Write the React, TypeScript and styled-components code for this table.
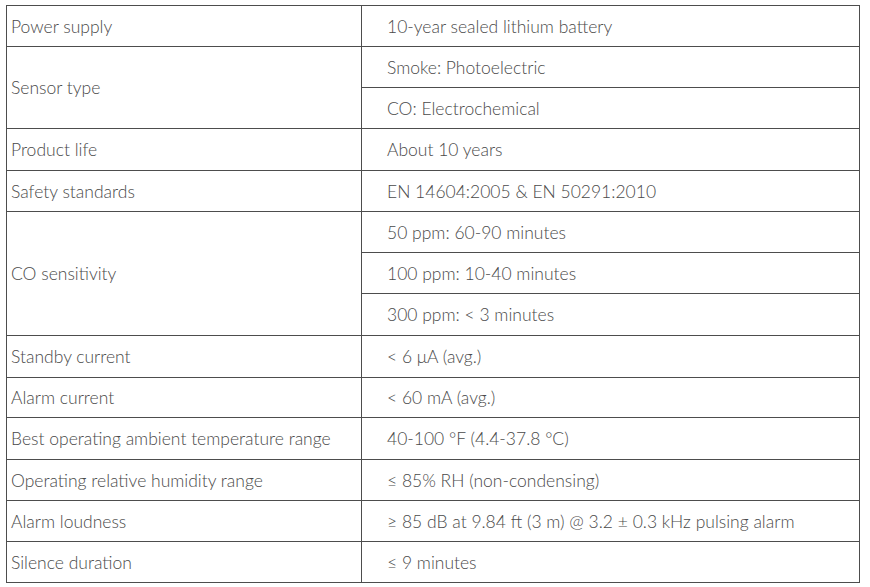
import React from "react";
import styled, { createGlobalStyle } from "styled-components";

type Spec = { label: string; values: string[]; heights: number[] };

const specs: Spec[] = [
	{ label: "Power supply", values: ["10-year sealed lithium battery"], heights: [40] },
	{ label: "Sensor type", values: ["Smoke: Photoelectric", "CO: Electrochemical"], heights: [40, 40] },
	{ label: "Product life", values: ["About 10 years"], heights: [41] },
	{ label: "Safety standards", values: ["EN 14604:2005 & EN 50291:2010"], heights: [40] },
	{
		label: "CO sensitivity",
		values: ["50 ppm: 60-90 minutes", "100 ppm: 10-40 minutes", "300 ppm: < 3 minutes"],
		heights: [40, 40, 41],
	},
	{ label: "Standby current", values: ["< 6 μA (avg.)"], heights: [41] },
	{ label: "Alarm current", values: ["< 60 mA (avg.)"], heights: [39] },
	{ label: "Best operating ambient temperature range", values: ["40-100 °F (4.4-37.8 °C)"], heights: [41] },
	{ label: "Operating relative humidity range", values: ["≤ 85% RH (non-condensing)"], heights: [40] },
	{ label: "Alarm loudness", values: ["≥ 85 dB at 9.84 ft (3 m) @ 3.2 ± 0.3 kHz pulsing alarm"], heights: [40] },
	{ label: "Silence duration", values: ["≤ 9 minutes"], heights: [40] },
];

const App = () => {
	const rows = specs.flatMap((s) => s.heights.map((h) => `${h}px`)).join(" ");
	let line = 1;
	return (
		<>
			<GlobalStyle />
			<Page>
				<SpecGrid style={{ gridTemplateRows: rows }}>
					{specs.map((s) => {
						const start = line;
						line += s.values.length;
						return (
							<React.Fragment key={s.label}>
								<Label style={{ gridRow: `${start} / span ${s.values.length}` }}>{s.label}</Label>
								{s.values.map((v) => (
									<Value key={v}>{v}</Value>
								))}
							</React.Fragment>
						);
					})}
				</SpecGrid>
			</Page>
		</>
	);
};

export default App;

const GlobalStyle = createGlobalStyle`
	body {
		margin: 0;
		background: #ffffff;
	}
`;

const Page = styled.div`
	width: 870px;
	height: 587px;
	padding: 5px 0 0 6px;
	box-sizing: border-box;
	background: #ffffff;
`;

const SpecGrid = styled.div`
	width: 854px;
	display: grid;
	grid-template-columns: 354px 497px;
	gap: 1px;
	padding: 1px;
	box-sizing: border-box;
	background-color: #4d4d4d;
	font-family: Lato, "Open Sans", sans-serif;
	font-weight: 300;
	font-size: 17.5px;
	color: #4a4a4a;
`;

const Label = styled.div`
	grid-column: 1;
	background: #ffffff;
	display: flex;
	align-items: center;
	padding: 0 0 0 4px;
	white-space: nowrap;
`;

const Value = styled.div`
	grid-column: 2;
	background: #ffffff;
	display: flex;
	align-items: center;
	padding: 0 0 0 25px;
	white-space: nowrap;
`;
